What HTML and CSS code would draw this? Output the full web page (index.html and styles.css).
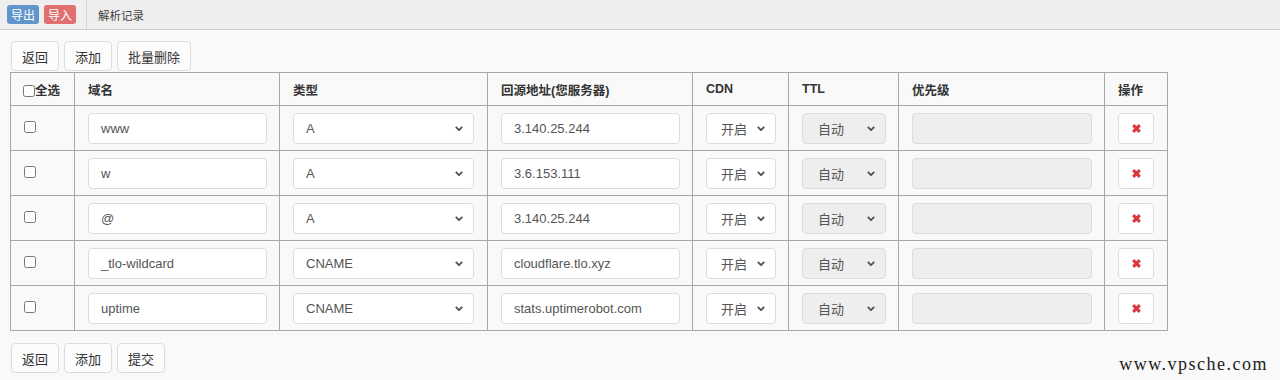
FILE: index.html
```html
<!DOCTYPE html>
<html lang="zh">
<head>
<meta charset="utf-8">
<link rel="stylesheet" href="styles.css">
</head>
<body>
<div class="topbar">
  <div class="tb-actions">
    <span class="tag tag-blue">导出</span>
    <span class="tag tag-red">导入</span>
  </div>
  <div class="tb-title">解析记录</div>
</div>
<div class="main">
  <div class="btns">
    <button class="btn">返回</button>
    <button class="btn">添加</button>
    <button class="btn">批量删除</button>
  </div>
  <table class="grid">
    <colgroup>
      <col class="c1"><col class="c2"><col class="c3"><col class="c4"><col class="c5"><col class="c6"><col class="c7"><col class="c8">
    </colgroup>
    <thead>
      <tr>
        <th class="th-check"><input type="checkbox" class="cb"><span>全选</span></th>
        <th>域名</th>
        <th>类型</th>
        <th>回源地址(您服务器)</th>
        <th>CDN</th>
        <th>TTL</th>
        <th>优先级</th>
        <th>操作</th>
      </tr>
    </thead>
    <tbody>
      <tr>
        <td class="td-check"><input type="checkbox" class="cb"></td>
        <td><div class="inp w-name">www</div></td>
        <td><div class="sel w-type"><span>A</span><svg class="chev" viewBox="0 0 10 6"><path d="M1 1l4 4 4-4"/></svg></div></td>
        <td><div class="inp w-src">3.140.25.244</div></td>
        <td><div class="sel w-cdn"><span>开启</span><svg class="chev" viewBox="0 0 10 6"><path d="M1 1l4 4 4-4"/></svg></div></td>
        <td><div class="sel dis w-ttl"><span>自动</span><svg class="chev" viewBox="0 0 10 6"><path d="M1 1l4 4 4-4"/></svg></div></td>
        <td><div class="inp dis w-pri"></div></td>
        <td><div class="del"><svg viewBox="0 0 10 10"><path d="M2 2l6 6M8 2l-6 6"/></svg></div></td>
      </tr>
      <tr>
        <td class="td-check"><input type="checkbox" class="cb"></td>
        <td><div class="inp w-name">w</div></td>
        <td><div class="sel w-type"><span>A</span><svg class="chev" viewBox="0 0 10 6"><path d="M1 1l4 4 4-4"/></svg></div></td>
        <td><div class="inp w-src">3.6.153.111</div></td>
        <td><div class="sel w-cdn"><span>开启</span><svg class="chev" viewBox="0 0 10 6"><path d="M1 1l4 4 4-4"/></svg></div></td>
        <td><div class="sel dis w-ttl"><span>自动</span><svg class="chev" viewBox="0 0 10 6"><path d="M1 1l4 4 4-4"/></svg></div></td>
        <td><div class="inp dis w-pri"></div></td>
        <td><div class="del"><svg viewBox="0 0 10 10"><path d="M2 2l6 6M8 2l-6 6"/></svg></div></td>
      </tr>
      <tr>
        <td class="td-check"><input type="checkbox" class="cb"></td>
        <td><div class="inp w-name">@</div></td>
        <td><div class="sel w-type"><span>A</span><svg class="chev" viewBox="0 0 10 6"><path d="M1 1l4 4 4-4"/></svg></div></td>
        <td><div class="inp w-src">3.140.25.244</div></td>
        <td><div class="sel w-cdn"><span>开启</span><svg class="chev" viewBox="0 0 10 6"><path d="M1 1l4 4 4-4"/></svg></div></td>
        <td><div class="sel dis w-ttl"><span>自动</span><svg class="chev" viewBox="0 0 10 6"><path d="M1 1l4 4 4-4"/></svg></div></td>
        <td><div class="inp dis w-pri"></div></td>
        <td><div class="del"><svg viewBox="0 0 10 10"><path d="M2 2l6 6M8 2l-6 6"/></svg></div></td>
      </tr>
      <tr>
        <td class="td-check"><input type="checkbox" class="cb"></td>
        <td><div class="inp w-name">_tlo-wildcard</div></td>
        <td><div class="sel w-type"><span>CNAME</span><svg class="chev" viewBox="0 0 10 6"><path d="M1 1l4 4 4-4"/></svg></div></td>
        <td><div class="inp w-src">cloudflare.tlo.xyz</div></td>
        <td><div class="sel w-cdn"><span>开启</span><svg class="chev" viewBox="0 0 10 6"><path d="M1 1l4 4 4-4"/></svg></div></td>
        <td><div class="sel dis w-ttl"><span>自动</span><svg class="chev" viewBox="0 0 10 6"><path d="M1 1l4 4 4-4"/></svg></div></td>
        <td><div class="inp dis w-pri"></div></td>
        <td><div class="del"><svg viewBox="0 0 10 10"><path d="M2 2l6 6M8 2l-6 6"/></svg></div></td>
      </tr>
      <tr>
        <td class="td-check"><input type="checkbox" class="cb"></td>
        <td><div class="inp w-name">uptime</div></td>
        <td><div class="sel w-type"><span>CNAME</span><svg class="chev" viewBox="0 0 10 6"><path d="M1 1l4 4 4-4"/></svg></div></td>
        <td><div class="inp w-src">stats.uptimerobot.com</div></td>
        <td><div class="sel w-cdn"><span>开启</span><svg class="chev" viewBox="0 0 10 6"><path d="M1 1l4 4 4-4"/></svg></div></td>
        <td><div class="sel dis w-ttl"><span>自动</span><svg class="chev" viewBox="0 0 10 6"><path d="M1 1l4 4 4-4"/></svg></div></td>
        <td><div class="inp dis w-pri"></div></td>
        <td><div class="del"><svg viewBox="0 0 10 10"><path d="M2 2l6 6M8 2l-6 6"/></svg></div></td>
      </tr>
    </tbody>
  </table>
  <div class="btns btns-bottom">
    <button class="btn">返回</button>
    <button class="btn">添加</button>
    <button class="btn">提交</button>
  </div>
</div>
<div class="watermark">www.vpsche.com</div>
</body>
</html>
```

FILE: styles.css
```css
* { box-sizing: border-box; }
html, body {
  margin: 0;
  padding: 0;
  background: #f9f9f9;
  font-family: "Liberation Sans", Arial, "Noto Sans CJK SC", sans-serif;
  font-size: 13px;
  color: #333;
}
body { position: relative; height: 380px; overflow: hidden; }

.topbar {
  display: flex;
  align-items: stretch;
  height: 30px;
  background: #eeeeee;
  border-bottom: 1px solid #d0d0d0;
}
.tb-actions {
  display: flex;
  align-items: center;
  gap: 5px;
  padding: 0 10px 0 7px;
  border-right: 1px solid #d6d6d6;
}
.tag {
  display: inline-flex;
  align-items: center;
  justify-content: center;
  height: 19px;
  width: 32px;
  border-radius: 3px;
  color: #fff;
  font-size: 12px;
  font-family: "Noto Sans CJK SC", sans-serif;
}
.tag-blue { background: #6196cc; }
.tag-red { background: #e07070; }
.tb-title {
  display: flex;
  align-items: center;
  padding-left: 11px;
  font-size: 11.5px;
  color: #444;
  font-family: "Noto Sans CJK SC", sans-serif;
}

.main { padding: 11px 0 0 10px; }
.btns { display: flex; gap: 5px; margin-left: 1px; margin-bottom: 1px; }
.btns-bottom { margin-top: 12px; }
.btn {
  height: 30px;
  padding: 0 10px;
  background: #fcfcfc;
  border: 1px solid #dcdcdc;
  border-radius: 4px;
  font-family: "Noto Sans CJK SC", sans-serif;
  font-size: 13px;
  color: #333;
}

.grid {
  border-collapse: collapse;
  table-layout: fixed;
  width: 1158px;
}
.c1 { width: 64px; }
.c2 { width: 205px; }
.c3 { width: 208px; }
.c4 { width: 205px; }
.c5 { width: 96px; }
.c6 { width: 110px; }
.c7 { width: 206px; }
.c8 { width: 63px; }

.grid th, .grid td {
  border: 1px solid #a8a8a8;
  text-align: left;
  vertical-align: middle;
}
.grid th {
  height: 33px;
  padding: 0 13px;
  font-weight: bold;
  font-size: 12.5px;
  color: #333;
  font-family: "Liberation Sans", Arial, "Noto Sans CJK SC", sans-serif;
}
.grid th.th-check { padding: 0 0 0 12px; }
.th-check { white-space: nowrap; }
.th-check .cb { vertical-align: -2px; }
.grid td {
  height: 45px;
  padding: 0 13px 0 13px;
}
.grid td.td-check { padding-left: 13px; }

.cb {
  width: 12px;
  height: 12px;
  margin: 0;
  accent-color: #888;
}

.inp, .sel {
  height: 31px;
  background: #fff;
  border: 1px solid #dcdcdc;
  border-radius: 4px;
  color: #555;
  font-size: 13px;
  display: flex;
  align-items: center;
  padding: 0 12px;
  white-space: nowrap;
  overflow: hidden;
}
.sel { justify-content: space-between; padding-right: 10px; font-family: "Liberation Sans", Arial, "Noto Sans CJK SC", sans-serif; }
.dis { background: #eeeeee; }
.chev {
  width: 8px;
  height: 5px;
  fill: none;
  stroke: #555;
  stroke-width: 2.4;
}
.w-name { width: 179px; }
.w-type { width: 181px; }
.w-src { width: 179px; }
.w-cdn { width: 70px; padding-left: 14px; }
.w-ttl { width: 84px; padding-left: 15px; }
.w-pri { width: 180px; }

.del {
  width: 36px;
  height: 31px;
  background: #fff;
  border: 1px solid #dcdcdc;
  border-radius: 4px;
  display: flex;
  align-items: center;
  justify-content: center;
}
.del svg {
  width: 11px;
  height: 11px;
  stroke: #d9393d;
  stroke-width: 2.8;
  fill: none;
}

.watermark {
  position: absolute;
  right: 12px;
  bottom: 5px;
  font-family: "Liberation Serif", "Times New Roman", serif;
  font-size: 18px;
  color: #222;
  letter-spacing: 1.5px;
}
```
